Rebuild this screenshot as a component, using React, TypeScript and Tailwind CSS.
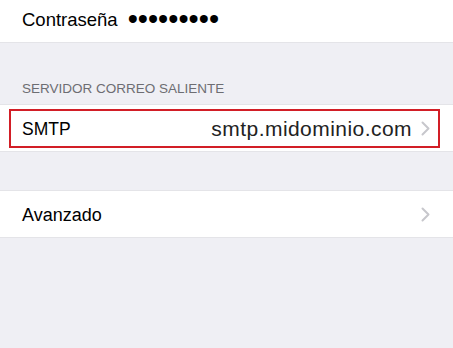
import type { ReactNode } from "react";

// iOS-style mail settings list: password row, outgoing server group, advanced row.

function Chevron() {
  return (
    <svg width="9" height="15" viewBox="0 0 9 15" className="shrink-0">
      <polyline
        points="1.5,1.5 7.5,7.5 1.5,13.5"
        fill="none"
        stroke="#c7c7cc"
        strokeWidth="2"
        strokeLinecap="round"
        strokeLinejoin="round"
      />
    </svg>
  );
}

function Row({ children, className = "" }: { children: ReactNode; className?: string }) {
  return (
    <div className={`bg-white border-y border-[#e4e4e8] ${className}`}>{children}</div>
  );
}

export default function App() {
  return (
    <div
      className="w-[453px] h-[348px] overflow-hidden bg-[#efeff4] text-black"
      style={{ fontFamily: '"Liberation Sans", Arial, sans-serif' }}
    >
      {/* password row */}
      <div className="bg-white h-[43px] flex items-center pl-[22px] pb-[3px] border-b border-[#e4e4e8]">
        <span className="text-[18.5px]">Contraseña</span>
        <span className="ml-[10px] text-[29px] leading-none">•••••••••</span>
      </div>

      {/* section header */}
      <div className="h-[61px] flex items-end pl-[22px] pb-[9px]">
        <span className="text-[13.5px] text-[#6d6d72] leading-none">SERVIDOR CORREO SALIENTE</span>
      </div>

      {/* SMTP row, highlighted */}
      <Row className="h-[48px] pt-[4px] pb-[3px] pl-[9px] pr-[13px]">
        <div className="h-full border-[2.5px] border-[#d21e26] flex items-center pl-[11px] pr-[8px]">
          <span className="text-[17.5px] mt-[2px]">SMTP</span>
          <span className="ml-auto text-[21px] tracking-[0.45px] text-[#222] mt-[1px]">smtp.midominio.com</span>
          <span className="ml-[9px] flex items-center">
            <Chevron />
          </span>
        </div>
      </Row>

      <div className="h-[38px]" />

      {/* advanced row */}
      <Row className="h-[48px] flex items-center pl-[22px] pr-[23px]">
        <span className="text-[18px] mt-[2px]">Avanzado</span>
        <span className="ml-auto flex items-center">
          <Chevron />
        </span>
      </Row>
    </div>
  );
}
